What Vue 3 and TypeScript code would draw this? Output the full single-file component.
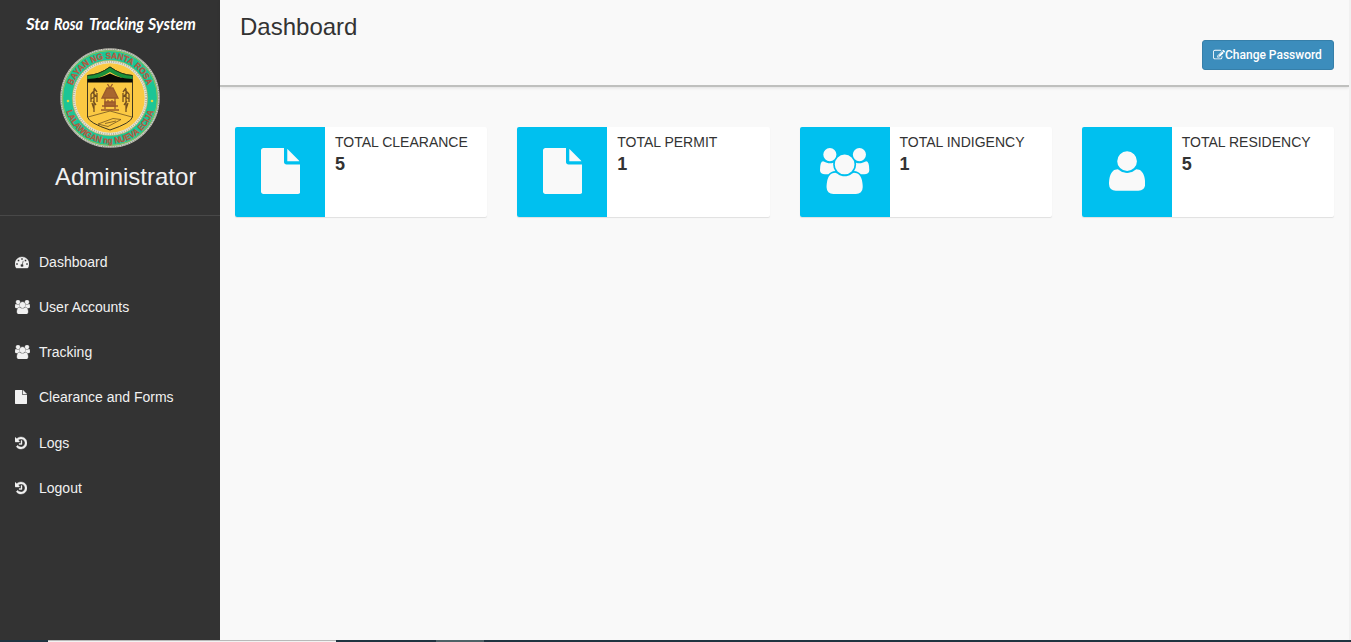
<script setup lang="ts">
interface Icon {
  box: string
  width: number
  d: string
}

const icons: Record<string, Icon> = {
  gauge: {
    box: '0 0 1792 1792',
    width: 1,
    d: 'M384 1152q0-53-37.5-90.5t-90.5-37.5-90.5 37.5-37.5 90.5 37.5 90.5 90.5 37.5 90.5-37.5 37.5-90.5zm192-448q0-53-37.5-90.5t-90.5-37.5-90.5 37.5-37.5 90.5 37.5 90.5 90.5 37.5 90.5-37.5 37.5-90.5zm428 481l101-382q6-26-7.5-48.5t-38.5-29.5-48 6.5-30 39.5l-101 382q-60 5-107 43.5t-63 98.5q-20 77 20 146t117 89 146-20 89-117q16-60-6-117t-72-91zm660-33q0-53-37.5-90.5t-90.5-37.5-90.5 37.5-37.5 90.5 37.5 90.5 90.5 37.5 90.5-37.5 37.5-90.5zm-640-640q0-53-37.5-90.5t-90.5-37.5-90.5 37.5-37.5 90.5 37.5 90.5 90.5 37.5 90.5-37.5 37.5-90.5zm448 192q0-53-37.5-90.5t-90.5-37.5-90.5 37.5-37.5 90.5 37.5 90.5 90.5 37.5 90.5-37.5 37.5-90.5zm320 448q0 261-141 483-19 29-54 29h-1402q-35 0-54-29-141-221-141-483 0-182 71-348t191-286 286-191 348-71 348 71 286 191 191 286 71 348z',
  },
  users: {
    box: '-64 0 1920 1792',
    width: 1920 / 1792,
    d: 'M529 896q-162 5-265 128h-134q-82 0-138-40.5t-56-118.5q0-353 124-353 6 0 43.5 21t97.5 42.5 119 21.5q67 0 133-23-5 37-5 66 0 139 81 256zm1071 637q0 120-73 189.5t-194 69.5h-874q-121 0-194-69.5t-73-189.5q0-53 3.5-103.5t14-109 26.5-108.5 43-97.5 62-81 85.5-53.5 111.5-20q10 0 43 21.5t73 48 107 48 135 21.5 135-21.5 107-48 73-48 43-21.5q61 0 111.5 20t85.5 53.5 62 81 43 97.5 26.5 108.5 14 109 3.5 103.5zm-1024-1277q0 106-75 181t-181 75-181-75-75-181 75-181 181-75 181 75 75 181zm704 384q0 159-112.5 271.5t-271.5 112.5-271.5-112.5-112.5-271.5 112.5-271.5 271.5-112.5 271.5 112.5 112.5 271.5zm576 225q0 78-56 118.5t-138 40.5h-134q-103-123-265-128 81-117 81-256 0-29-5-66 66 23 133 23 59 0 119-21.5t97.5-42.5 43.5-21q124 0 124 353zm-128-609q0 106-75 181t-181 75-181-75-75-181 75-181 181-75 181 75 75 181z',
  },
  user: {
    box: '192 0 1408 1792',
    width: 1408 / 1792,
    d: 'M1600 1405q0 120-73 189.5t-194 69.5h-874q-121 0-194-69.5t-73-189.5q0-53 3.5-103.5t14-109 26.5-108.5 43-97.5 62-81 85.5-53.5 111.5-20q9 0 42 21.5t74.5 48 108 48 133.5 21.5 133.5-21.5 108-48 74.5-48 42-21.5q61 0 111.5 20t85.5 53.5 62 81 43 97.5 26.5 108.5 14 109 3.5 103.5zm-320-893q0 159-112.5 271.5t-271.5 112.5-271.5-112.5-112.5-271.5 112.5-271.5 271.5-112.5 271.5 112.5 112.5 271.5z',
  },
  file: {
    box: '128 0 1536 1792',
    width: 1536 / 1792,
    d: 'M1152 512v-472q22 14 36 28l408 408q14 14 28 36h-472zm-128 32q0 40 28 68t68 28h544v1056q0 40-28 68t-68 28h-1344q-40 0-68-28t-28-68v-1600q0-40 28-68t68-28h800v544z',
  },
  history: {
    box: '128 0 1536 1792',
    width: 1536 / 1792,
    d: 'M1664 896q0 156-61 298t-164 245-245 164-298 61q-172 0-327-72.5t-264-204.5q-7-10-6.5-22.5t8.5-20.5l137-138q10-9 25-9 16 2 23 12 73 95 179 147t225 52q104 0 198.5-40.5t163.5-109.5 109.5-163.5 40.5-198.5-40.5-198.5-109.5-163.5-163.5-109.5-198.5-40.5q-98 0-188 35.5t-160 101.5l137 138q31 30 14 69-17 40-59 40h-448q-26 0-45-19t-19-45v-448q0-42 40-59 39-17 69 14l130 129q107-101 244.5-156.5t284.5-55.5q156 0 298 61t245 164 164 245 61 298zm-640-288v448q0 14-9 23t-23 9h-320q-14 0-23-9t-9-23v-64q0-14 9-23t23-9h224v-352q0-14 9-23t23-9h64q14 0 23 9t9 23z',
  },
}

const brandWords = [
  { text: 'Sta', x: 26, width: 23 },
  { text: 'Rosa', x: 54, width: 29 },
  { text: 'Tracking', x: 89, width: 55 },
  { text: 'System', x: 148, width: 48 },
]

const menu = [
  { label: 'Dashboard', icon: icons.gauge },
  { label: 'User Accounts', icon: icons.users },
  { label: 'Tracking', icon: icons.users },
  { label: 'Clearance and Forms', icon: icons.file },
  { label: 'Logs', icon: icons.history },
  { label: 'Logout', icon: icons.history },
]

const cards = [
  { label: 'Total Clearance', value: 5, icon: icons.file },
  { label: 'Total Permit', value: 1, icon: icons.file },
  { label: 'Total Indigency', value: 1, icon: icons.users },
  { label: 'Total Residency', value: 5, icon: icons.user },
]
</script>

<template>
  <div class="page">
    <div class="body">
      <aside class="sidebar">
        <div class="brand">
          <svg class="brand-name" width="220" height="47" viewBox="0 0 220 47">
            <text v-for="word in brandWords" :key="word.text" :x="word.x" y="30" :textLength="word.width" lengthAdjust="spacingAndGlyphs">{{ word.text }}</text>
          </svg>
          <svg class="seal" width="102" height="102" viewBox="-51 -51 102 102">
            <defs>
              <path id="arc-top" d="M-39.4 0A39.4 39.4 0 0 1 39.4 0" />
              <path id="arc-bottom" d="M-45.6 0A45.6 45.6 0 0 0 45.6 0" />
            </defs>
            <circle r="48.8" fill="#1cc596" stroke="#c9c9bd" stroke-width="1.8" />
            <circle r="49.1" fill="none" stroke="#77776c" stroke-width="1" stroke-dasharray="1 1.4" />
            <circle r="47.4" fill="none" stroke="#b9ba43" stroke-width=".8" />
            <circle r="36.2" fill="#fbc943" stroke="#e5e3d2" stroke-width="3" />
            <circle r="36.2" fill="none" stroke="#a3a496" stroke-width="2" stroke-dasharray=".7 1.5" />
            <circle r="37.7" fill="none" stroke="#a6ad42" stroke-width=".6" />
            <text class="seal-text"><textPath href="#arc-top" startOffset="50%" text-anchor="middle" textLength="98" lengthAdjust="spacingAndGlyphs">BAYAN NG SANTA ROSA</textPath></text>
            <text class="seal-text"><textPath href="#arc-bottom" startOffset="50%" text-anchor="middle" textLength="116" lengthAdjust="spacingAndGlyphs">LALAWIGAN ng NUEVA ECIJA</textPath></text>
            <circle cx="-42" cy="3" r="1.3" fill="#e5d63d" />
            <circle cx="42" cy="3" r="1.3" fill="#e5d63d" />
            <path d="M-22.5-22.5Q-11-23 0-31Q11-23 22.5-22.5V19Q21 25 0 32Q-21 25-22.5 19Z" fill="#fbc943" stroke="#3f3820" stroke-width="1" />
            <path d="M-22.5-22.5Q-11-23 0-31Q11-23 22.5-22.5V-18Q11-19 0-26Q-11-19-22.5-18Z" fill="#19913b" />
            <path d="M-22.5-19Q-10-19.5 0-24.5Q10-19.5 22.5-19V-15.5H-22.5Z" fill="#090b05" />
            <path d="M-22.5-22.5Q-11-23 0-31Q11-23 22.5-22.5" fill="none" stroke="#203d17" stroke-width="1" />
            <g stroke="#9a5a2b" fill="none" stroke-width="1.3">
              <path d="M-8 0L-3-10H3L8 0Z" fill="#a8652f" />
              <path d="M-2.5-14L0-10L2.5-14M-5 0V11M5 0V11M-8 8H8M-9 12H9M-2 2V7M2 2V7" />
              <path d="M-5 4H5V8H-5Z" fill="#a8652f" />
            </g>
            <path d="M-16-9V14M-15-8l-4 4M-17-5l4 4M-14-2l-5 3M-16-10l3 4M-17 3l3 4M-19-4v8M-13-5v9M-18 5l2 6M16-9V14M15-8l4 4M17-5l-4 4M14-2l5 3M16-10l-3 4M17 3l-3 4M19-4v8M13-5v9M18 5l-2 6" fill="none" stroke="#74501f" stroke-width="1.3" />
            <path d="M-22 19L0 13L22 19M-12 26L3 20.5L11 21.5L-2 28.5ZM-5 25.5L6 23" fill="none" stroke="#715321" stroke-width=".8" />
          </svg>
          <h2>Administrator</h2>
        </div>
        <nav class="menu">
          <a v-for="item in menu" :key="item.label" class="menu-item">
            <span class="menu-icon">
              <svg :viewBox="item.icon.box" :width="14 * item.icon.width" height="14"><path :d="item.icon.d" /></svg>
            </span>
            <span>{{ item.label }}</span>
          </a>
        </nav>
      </aside>

      <main class="content">
        <header class="header">
          <h1>Dashboard</h1>
          <button class="change" type="button">
            <svg viewBox="0 0 1792 1792" width="12" height="12">
              <path d="M888 1184l116-116-152-152-116 116v56h96v96h56zm440-720q-16-16-33 1l-350 350q-17 17-1 33t33-1l350-350q17-17 1-33zm80 594v190q0 119-84.5 203.5t-203.5 84.5h-832q-119 0-203.5-84.5t-84.5-203.5v-832q0-119 84.5-203.5t203.5-84.5h832q63 0 117 25 15 7 18 23 3 17-9 29l-49 49q-14 14-32 8-23-6-45-6h-832q-66 0-113 47t-47 113v832q0 66 47 113t113 47h832q66 0 113-47t47-113v-126q0-13 9-22l64-64q15-15 35-7t20 29zm-96-738l288 288-672 672h-288v-288zm444 132l-92 92-288-288 92-92q28-28 68-28t68 28l152 152q28 28 28 68t-28 68z" />
            </svg>
            <span>Change Password</span>
          </button>
        </header>
        <section class="cards">
          <article v-for="card in cards" :key="card.label" class="card">
            <div class="card-icon">
              <svg :viewBox="card.icon.box" :width="46 * card.icon.width" height="46"><path :d="card.icon.d" /></svg>
            </div>
            <div class="card-text">
              <span class="card-label">{{ card.label }}</span>
              <strong>{{ card.value }}</strong>
            </div>
          </article>
        </section>
      </main>
      <div class="edge"></div>
    </div>
    <footer class="taskbar">
      <div class="task-start"></div>
      <div class="task-search"></div>
      <div class="task-gap"></div>
      <div class="task-active"></div>
    </footer>
  </div>
</template>

<style>
body {
  margin: 0;
  overflow: hidden;
}
</style>

<style scoped>
.page {
  display: flex;
  flex-direction: column;
  width: 1351px;
  height: 642px;
  font-family: "Liberation Sans", Arial, sans-serif;
  font-size: 14px;
  color: #333;
  background: #f9f9f9;
}
.page *,
.page {
  box-sizing: border-box;
}
svg {
  display: block;
  fill: currentColor;
  flex: none;
}
h1,
h2 {
  margin: 0;
  font-weight: 400;
  font-size: 24px;
}
.body {
  display: flex;
  height: 640px;
}
.sidebar {
  width: 220px;
  background: #333;
  color: #f1f1f1;
}
.brand {
  height: 216px;
  border-bottom: 1px solid #484848;
}
.brand-name {
  overflow: visible;
}
.brand-name text {
  font: italic 700 17.5px Lato, sans-serif;
  fill: #fff;
}
.seal {
  margin: 0 0 0 59px;
}
.brand h2 {
  margin: 14px 0 0 55px;
  line-height: 28px;
}
.seal-text {
  font: 700 8.6px "Liberation Sans", Arial, sans-serif;
  fill: #b8573f;
  stroke: #b8573f;
  stroke-width: 0.3px;
}
.menu {
  padding-top: 23.2px;
}
.menu-item {
  display: flex;
  align-items: center;
  height: 45.2px;
  padding-left: 15px;
}
.menu-icon {
  width: 24px;
}
.menu-icon path {
  stroke: currentColor;
  stroke-width: 50px;
}
.content {
  width: 1129px;
}
.header {
  display: flex;
  justify-content: space-between;
  height: 87px;
  padding: 13px 15px 0 20px;
  border-bottom: 2px solid #bfc0be;
  box-shadow: 0 1px 3px rgba(0, 0, 0, 0.1);
}
.header h1 {
  line-height: 28px;
}
.change {
  display: flex;
  align-items: center;
  width: 132px;
  height: 30px;
  margin-top: 27px;
  padding: 0 0 0 10px;
  border: 1px solid #367fa9;
  border-radius: 3px;
  background: #3c8dbc;
  color: #fff;
  font: 500 12px Roboto, sans-serif;
}
.cards {
  display: grid;
  grid-template-columns: repeat(4, 1fr);
  gap: 30px;
  padding: 40px 15px 0;
}
.card {
  display: flex;
  height: 90px;
  border-radius: 2px;
  background: #fff;
  box-shadow: 0 1px 1px rgba(0, 0, 0, 0.1);
}
.card-icon {
  display: flex;
  align-items: center;
  justify-content: center;
  width: 90px;
  padding: 0 0 2px 1px;
  border-radius: 2px 0 0 2px;
  background: #00c0ef;
  color: #f9f9f9;
}
.card-text {
  padding: 5px 10px;
}
.card-label {
  display: block;
  line-height: 20px;
  text-transform: uppercase;
  white-space: nowrap;
}
.card-text strong {
  display: block;
  font-size: 18px;
  line-height: 25px;
}
.edge {
  width: 2px;
  background: #f1f1f1;
}
.taskbar {
  display: flex;
  height: 2px;
  background: #1f3440;
}
.task-start {
  width: 48px;
}
.task-search {
  width: 288px;
  border-top: 1px solid #b9b9b9;
  background: #f2f2f2;
}
.task-gap {
  width: 100px;
}
.task-active {
  width: 48px;
  background: #4e6267;
}
</style>
